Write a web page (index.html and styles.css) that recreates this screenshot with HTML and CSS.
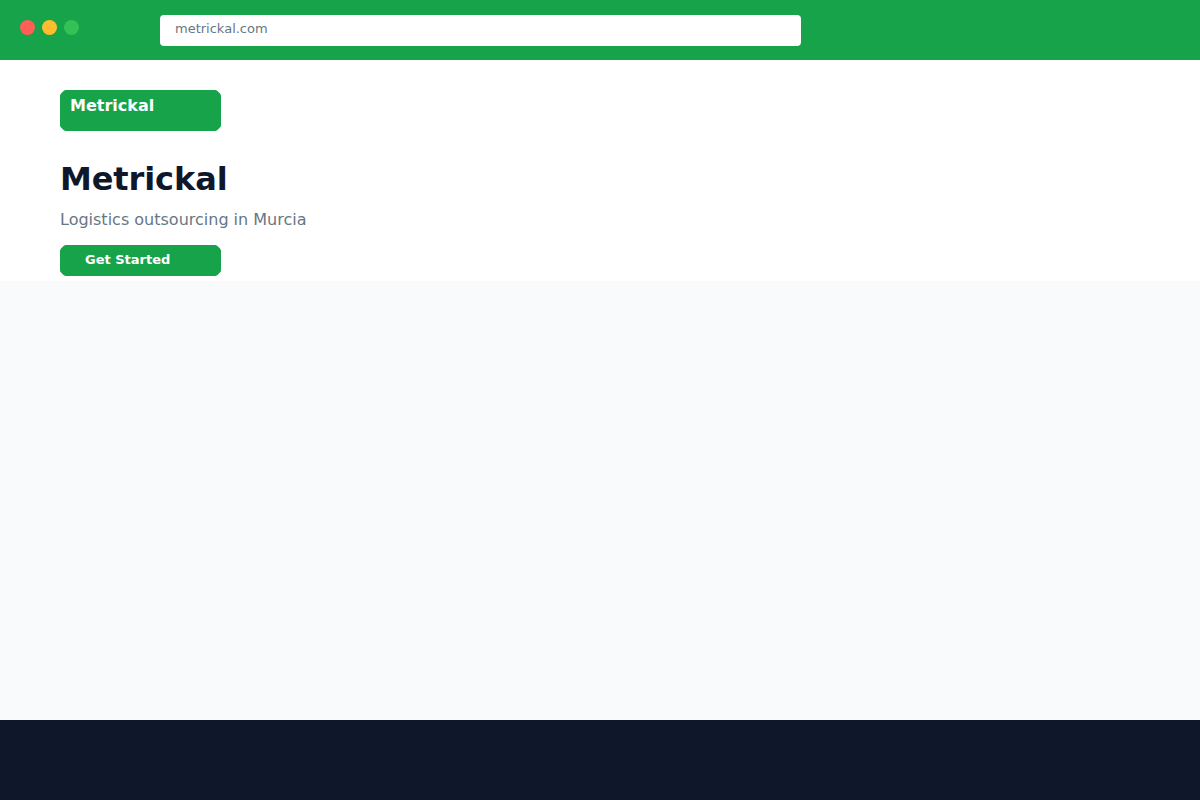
FILE: index.html
```html
<!DOCTYPE html>
<html lang="en">
<head>
    <meta charset="UTF-8">
    <meta name="viewport" content="width=device-width, initial-scale=1.0">
    <title>Metrickal</title>
    <link rel="stylesheet" href="styles.css">
</head>
<body>
    <header class="browser-bar">
        <div class="dots">
            <span class="dot dot-red"></span>
            <span class="dot dot-yellow"></span>
            <span class="dot dot-green"></span>
        </div>
        <div class="address">metrickal.com</div>
    </header>

    <main class="hero">
        <div class="logo">Metrickal</div>
        <h1>Metrickal</h1>
        <p class="tagline">Logistics outsourcing in Murcia</p>
        <a class="btn" href="#">Get Started</a>
    </main>

    <section class="content"></section>
    <footer class="footer"></footer>
</body>
</html>
```
FILE: styles.css
```css
* {
    margin: 0;
    padding: 0;
    box-sizing: border-box;
}

body {
    font-family: "DejaVu Sans", sans-serif;
    display: flex;
    flex-direction: column;
    height: 100vh;
    background: #f8fafc;
    color: #0f172a;
}

.browser-bar {
    display: flex;
    align-items: flex-start;
    height: 60px;
    padding: 15px 20px;
    background: #16a34a;
}

.dots {
    display: flex;
    gap: 7px;
    width: 140px;
    padding-top: 5px;
}

.dot {
    width: 15px;
    height: 15px;
    border-radius: 50%;
}

.dot-red {
    background: #ff5f57;
}

.dot-yellow {
    background: #ffbd2e;
}

.dot-green {
    background: #34c156;
}

.address {
    width: 641px;
    height: 31px;
    padding: 0 15px;
    border-radius: 4px;
    background: #fff;
    color: #667784;
    font-size: 13px;
    line-height: 27px;
}

.hero {
    height: 221px;
    padding: 30px 60px 0;
    background: #fff;
}

/* cut corners on the logo and the button */
.logo,
.btn {
    width: 161px;
    background: #16a34a;
    color: #fff;
    font-weight: bold;
    border-radius: 6px;
    clip-path: polygon(4.5px 0, calc(100% - 4.5px) 0, 100% 4.5px, 100% calc(100% - 4.5px), calc(100% - 4.5px) 100%, 4.5px 100%, 0 calc(100% - 4.5px), 0 4.5px);
}

.logo {
    height: 41px;
    padding: 0 10px;
    font-size: 16px;
    line-height: 32px;
}

h1 {
    margin-top: 29px;
    font-size: 32px;
    line-height: 38px;
    letter-spacing: -0.1px;
}

.tagline {
    margin-top: 12px;
    color: #667784;
    font-size: 16px;
    line-height: 20px;
}

.btn {
    display: block;
    height: 31px;
    margin-top: 15px;
    padding: 0 25px;
    font-size: 13px;
    line-height: 30px;
    text-decoration: none;
}

.content {
    flex: 1;
    background: #f8fafc;
}

.footer {
    height: 80px;
    background: #0f172a;
}
```
